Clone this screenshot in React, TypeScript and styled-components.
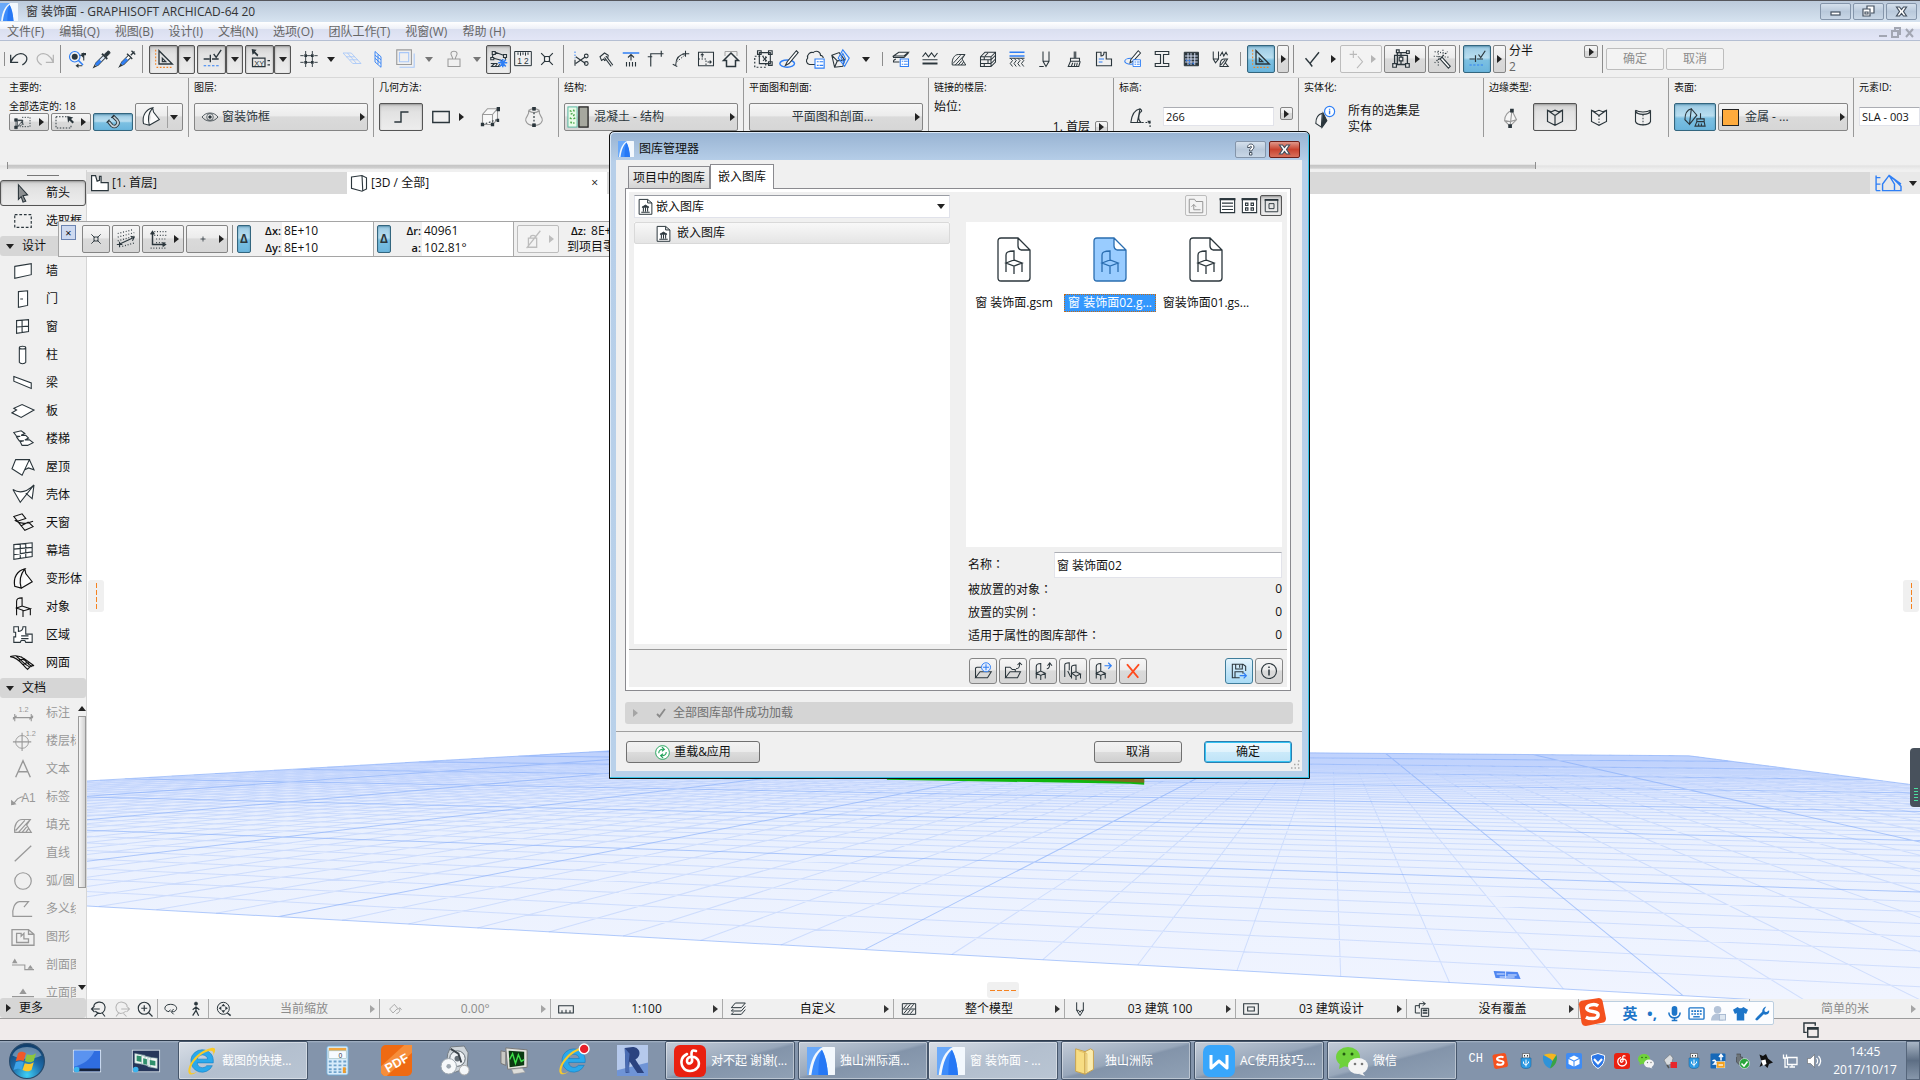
import React, { ReactNode } from "react";
import styled, { createGlobalStyle, css } from "styled-components";

const INK = "#2b363c";
const BLUE = "#2f7ff5";
const PALE = "#a9c8f8";
const GREY = "#9b9b9b";
const ORANGE = "#f58220";

const Global = createGlobalStyle`
  *, *::before, *::after { box-sizing: border-box; }
  body { margin: 0; background: #fff; overflow: hidden; }
  body, button, input, select {
    font-family: "Open Sans", "Noto Sans CJK SC", sans-serif;
    font-size: 12px;
    line-height: 16px;
    color: #111;
  }
  button { margin: 0; padding: 0; border: 0; background: none; }
`;

/* ---------- icons ---------- */

const p = (d: string, stroke: string = "currentColor", fill: string = "none", w = 1.2) => (
  <path d={d} stroke={stroke} fill={fill} strokeWidth={w} />
);
const dash = (d: string, stroke: string = "currentColor", pattern = "2 2") => (
  <path d={d} stroke={stroke} fill="none" strokeWidth={1.3} strokeDasharray={pattern} />
);
const t = (x: number, y: number, size: number, s: string, fill = "currentColor") => (
  <text x={x} y={y} fontSize={size} fill={fill} stroke="none" fontFamily="Liberation Sans, sans-serif">
    {s}
  </text>
);

const icons: Record<string, ReactNode> = {
  undo: <>{p("M2 7v9h9M2 16C5 8 12 4 17 6c7 3 5 10-1 13", "currentColor", "none", 1.5)}</>,
  redo: <>{p("M22 7v9h-9M22 16C19 8 12 4 7 6c-7 3-5 10 1 13", "currentColor", "none", 1.5)}</>,
  findPick: <>{p("M15 7h6v7M19 21h-7", INK, "none", 1.4)}{p("M17 7l4-4v8zM14 18l-4 3 4 3zM18 4h6v3h-6z", "none", INK)}<circle cx="9" cy="9" r="7" stroke={BLUE} fill="none" strokeWidth="1.5" /><circle cx="9" cy="9" r="4" fill={INK} stroke="none" />{p("M14 14l6 6", BLUE, "none", 2.2)}</>,
  dropper: <>{p("M15 6l4-4c2-2 5 1 3 3l-4 4z", INK, INK)}{p("M12 5l7 7", INK, "none", 2.4)}{p("M13 8L4 17l-3 6 6-3 9-9", INK, "#dfe9f8", 1.4)}{p("M10 14l-6 6", BLUE, "none", 4)}</>,
  syringe: <>{p("M17 7l5-5M18 1l5 5M12 5l7 7", INK, "none", 1.8)}{p("M14 7l-9 9-3 6 6-3 9-9z", INK, "#fff", 1.4)}{p("M12 12l-7 7", BLUE, "none", 4)}{p("M5 19l-4 4", INK)}</>,
  setSquare: <>{p("M6 2v16h16z", INK, "none", 1.6)}{p("M10 11v4h4z", INK, "none", 1.5)}{dash("M2 1v20", ORANGE)}{dash("M3 22h20", ORANGE)}</>,
  snap: <>{p("M2 12h7M10 7v9M12 12h8M14 6l3 4 6-9", INK, "none", 1.6)}{dash("M2 20h20", BLUE, "3 2")}</>,
  coords: <>{p("M2 0l1 7 2-2 4 4 1-2-4-4 2-2z", "none", INK)}{p("M3 11h15v10H3z", INK, "none", 1.5)}{t(5, 20, 9, "XY")}{p("M21 14h3M21 19h3", INK, "none", 1.5)}</>,
  gridPlus: <>{p("M7 0v5M7 9v6M7 19v5M17 0v5M17 9v6M17 19v5M-1 7h5M9 7h6M20 7h5M-1 17h5M9 17h6M20 17h5", INK, "none", 1.4)}{p("M5 5h4v4H5zM15 5h4v4h-4zM5 15h4v4H5zM15 15h4v4h-4z", "none", INK)}</>,
  planeFlat: <>{p("M0 4h11l13 14H13zM4 9h12M9 13h11M6 4l12 14", PALE)}</>,
  planeWall: <>{p("M8 2l8 7v14l-8-7zM8 7l8 6M8 11l8 7M12 6v13", BLUE)}</>,
  slab: <>{p("M6 21h16V6", PALE)}{p("M3 2h16v16H3z", GREY)}{p("M6 5h10v10H6z", PALE)}</>,
  stamp: <>{p("M4 12h16v10H4zM10 12c1-3-3-5-2-8 1-3 7-3 8 0 1 3-3 5-2 8", "currentColor", "none", 1.4)}</>,
  crane: <>{p("M3 2h4v4H3zM18 6h4v4h-4zM1 10h4v3H1zM7 3l11 4M4 6l-1 4M5 11l11 3M20 10l1 3", INK, "none", 1.5)}{p("M1 22h12M1 18h9M2 22l4-4M7 22l3-4M11 22l2-3", INK, "none", 1.5)}{p("M17 12v11M11 17h12M13 13l8 9M21 13l-8 9", BLUE, "none", 2)}</>,
  ruler12: <>{p("M2 3h20M2 20h20M2 3v17M22 3v17M6 4v3M9 4v4M12 4v3M15 4v4M18 4v3", INK)}{t(5, 18, 10, "1 2", INK)}</>,
  crossBox: <>{p("M9 9h6v6H9zM5 5l5 5M19 5l-5 5M5 19l5-5M19 19l-5-5", INK, "none", 1.4)}</>,
  scissors: <>{dash("M4 2v9", BLUE)}{p("M4 13v8M5 9l13 9M5 18l13-9", INK, "none", 1.5)}<circle cx="19" cy="8" r="2.5" fill="none" strokeWidth="1.4" /><circle cx="19" cy="18" r="2.5" fill="none" strokeWidth="1.4" /></>,
  axe: <>{p("M4 9l6-5 5 3-1 5-4 2-1-2-3 2z", INK, "none", 1.4)}{p("M11 9l9 12", INK, "none", 4)}{p("M11 9l9 12", "#f0f0f0", "none", 1.4)}</>,
  alignTop: <>{p("M1 4h22", BLUE, "none", 2)}{p("M12 6v8M8 10l4-4 4 4M6 16v6M10 16v6M14 16v6M18 16v6", INK, "none", 1.5)}</>,
  corner: <>{p("M5 22V9M1 9h6M5 9V5h17M19 1v8", INK, "none", 1.5)}</>,
  fillet: <>{p("M5 20c0-9 4-14 13-15M1 19l6 3M18 1v8M14 5h9", INK, "none", 1.4)}{dash("M6 16L18 6")}</>,
  resize: <>{p("M2 3h20v18H2z", INK, "none", 1.4)}{dash("M2 12h10v9", INK)}{p("M7 10V5M5 7l2-2 2 2M14 16h5M17 14l2 2-2 2", INK, "none", 1.4)}</>,
  house: <>{p("M2 14L12 4l10 10h-4v8H6v-8z", INK, "none", 2)}{p("M4 8V2h16v6", GREY)}</>,
  group: <>{p("M8 5h12v12H8zM6 3h4v4H6zM18 3h4v4h-4zM18 15h4v4h-4z")}{dash("M3 9h12v12H3z", INK)}{p("M12 10l4 4M16 10l-4 4")}</>,
  editRing: <><ellipse cx="10" cy="17" rx="8" ry="4" fill="none" stroke={BLUE} strokeWidth="1.6" />{p("M20 3l2 2-10 12-4 2 2-4z", INK, "#fff")}</>,
  cloudList: <>{p("M12 18H6c-4-1-4-5-2-7-1-4 3-7 6-6 3-3 8-1 8 3 2 0 3 2 3 3")}{p("M12 12h10v10H12z", BLUE, "#fff")}{p("M14 15h2M17 15h4M14 19h2M17 19h4", BLUE)}</>,
  rotateBox: <>{p("M2 8l8-3 6 8-2 7-9 1zM2 8l6 6-3 7M8 14l8-1")}{p("M14 2l7 9-5 9-7-9zM14 6l3 6-2 4-3-6z", BLUE)}</>,
  layersList: <>{p("M2 8l7-5h13l-6 5zM2 8v2h14l6-6M2 14l3-2M2 14v2h8", INK, "none", 1.4)}{p("M11 12h11v10H11z", BLUE, "#fff", 1.4)}{p("M13 15h2M16 15h5M13 19h2M16 19h5", BLUE)}</>,
  lineTypes: <>{p("M2 9l4-5 4 5 4-5 4 5 4-5M2 13h20", INK, "none", 1.5)}{p("M2 18h20", INK, "none", 2.6)}</>,
  fill: <>{p("M3 20c-1-8 3-14 8-14h9l-4 6 5 8zM4 18L14 7M7 20L19 7M11 20l5-6M15 20l3-4", "currentColor", "none", 1.3)}</>,
  brick: <>{p("M2 9l6-6h14v13l-6 6H2zM2 9h14v13M16 9l6-6M2 13h14l6-6M2 18h14l6-6M7 9v4M12 13v5M7 18v4M12 4l-4 4", INK, "none", 1.4)}</>,
  composite: <>{p("M2 3h20M2 8h20", BLUE, "none", 2)}{p("M3 11l3 3-3 4 3 4M8 11l3 3-3 4 3 4M13 11l3 3-3 4 3 4M18 11l3 3-3 4 3 4M2 11h20", INK, "none", 1.3)}</>,
  pen: <>{p("M8 2v13l4 7 4-7V2M8 15h8M3 22h6", INK, "none", 1.4)}</>,
  brush: <>{p("M11 2v9M13 2v9M6 11h12v4H6zM6 15l-3 7h14l2-7M7 22l2-5M11 22l1-5M14 22l1-5", INK, "none", 1.4)}</>,
  zone: <>{p("M2 3h6v5c3 0 4-2 4-5h3v9h7v9H2z", INK, "none", 1.5)}{p("M5 12h7M5 16h5", BLUE, "none", 1.4)}</>,
  penList: <><ellipse cx="9" cy="15" rx="8" ry="4" fill="none" stroke={BLUE} strokeWidth="1.4" />{p("M19 1l3 3-10 11-4 2 1-4z", INK, "#fff", 1.4)}{p("M12 13h10v9H12z", BLUE, "#fff")}{p("M14 16h2M17 16h4M14 19h2M17 19h4", BLUE)}</>,
  beamI: <>{p("M3 2h18v4h-7v12h7v4H3v-4h7V6H3z", INK, "none", 1.5)}</>,
  table: <>{p("M3 3h19v18H3z", INK, INK)}{p("M4 8h17M4 12h17M4 16h17M8 4v16M12 4v16M17 4v16", "#dfe8ff")}{p("M5 14h2M9 14h2M9 18h2M14 18h2", BLUE, "none", 2)}</>,
  penHatch: <>{p("M3 2v10l3 5 4-5V2M3 12h7M12 8l3-5 2 5 3-5 2 4M12 22c0-6 2-10 5-10h5l-3 5 4 5zM13 20l6-7M16 21l4-5", INK, "none", 1.4)}</>,
  branch: <>{p("M2 11l6 7L20 3M8 18l3 4", INK, "none", 1.9)}</>,
  plusChev: <>{p("M8 3v8M4 7h8M13 9l5 6-6 7", "#b9b9b9")}</>,
  nodes: <>{p("M5 8h14v10H5zM8 3v15M12 5v13M8 5h12", INK, "none", 1.4)}{p("M7 2h3v3H7zM18 3h3v3h-3zM3 17h4v4H3zM17 17h4v4h-4zM10 10h4v4h-4z", INK, "#e8e8e8", 1.3)}</>,
  wand: <>{p("M12 10l9 10-2 2-9-10z", INK, "#fff")}{dash("M4 4l14 2M3 9l16 1M6 14l12-10M8 3v16M13 2v7M4 16l10-8", INK, "1 2")}</>,
  pick: <>{p("M1 7h4v4H1zM1 18h4v4H1zM3 11v7M5 9h8v6M5 19l10-4", INK, INK, 1)}{p("M5 10h8l-8 9z", INK, "#eee")}{dash("M12 5h12v14H9")}</>,
  marqueeArrow: <>{dash("M0 5h14M0 5v15h20v-4")}{p("M15 4l8 2-3 2 4 4-2 2-4-4-2 3z", "none", INK)}</>,
  magnet: <>{p("M4 11l6 7c6 5 14-3 9-9l-7-7", INK, "none", 6)}{p("M5 12l5 6c6 5 14-3 9-9l-6-6", "#c3ced4", "none", 3)}{p("M1 13l5-5M9 5l5-5", INK, "none", 2)}</>,
  morph: <>{p("M3 20C1 10 6 3 14 1c-5 6-6 14-4 21zM14 1l1 5 7 9-12 7", "currentColor", "#fbfbfb", 1.3)}</>,
  eye: <>{p("M0 12c6-8 18-8 24 0-6 8-18 8-24 0z")}<circle cx="12" cy="12" r="5" fill="none" /><circle cx="12" cy="12" r="2" fill="currentColor" /></>,
  step: <>{p("M4 18h8V6h9", INK, "none", 1.7)}</>,
  rect: <>{p("M3 6h18v12H3z", INK, "none", 1.5)}</>,
  box3d: <>{p("M3 21V9l6-7h12v13l-6 6zM3 9h12v12M15 9l6-7", GREY, "#f8f8f8", 1.3)}{p("M20 0h4v5h-4zM13 19h4v4h-4zM1 19h4v4H1zM20 14h3v4h-3z", "none", INK)}{dash("M3 21l18-6")}</>,
  revolve: <>{p("M6 5c4-3 8-3 12 0M6 5c2 5-4 6-3 11 2 7 16 7 18 0 1-5-5-6-3-11M6 5c4 3 8 3 12 0", GREY, "none", 1.3)}{dash("M12 3v19")}{p("M10 1h4v4h-4zM10 19h4v4h-4z", "none", INK)}</>,
  concrete: <><rect x="1" y="1" width="10" height="22" fill="#e9fbe9" stroke="#4bb09a" /><rect x="13" y="1" width="10" height="22" fill="#a6a89f" stroke="#222" strokeWidth="1.4" />{p("M3 5l2 1M7 4l1 2M4 9l2-1M8 9l-1 2M3 13l2 1M7 14l2-1M4 17l1 2M8 18l-1 1", "#44a844", "none", 1.5)}</>,
  elevation: <>{p("M2 18c1-9 5-14 10-15 3 2 2 3 0 4-2 4-2 8 1 11zM12 3L9 18")}{dash("M14 18h9v5")}{p("M20 16h4l-2 4z", "none", INK)}</>,
  infoSolid: <>{p("M2 19c0-7 3-10 7-11l-1 15z", INK, "#f4f4f4")}{p("M10 8l4 8-5 7z", INK, INK)}<circle cx="17" cy="6" r="5.500" fill="#fff" stroke={BLUE} strokeWidth="1.3" />{p("M17 5v4M17 3v1", BLUE, "none", 1.5)}</>,
  edgeBall: <>{p("M5 16c0-6 4-10 8-11l-2 17zM13 5l5 10-7 7M5 16l6 1 7-2", GREY, "#f6f6f6")}{p("M11 3h4v4h-4zM9 20h4v4H9z", "none", INK)}</>,
  edgeHard: <>{p("M2 3l5 2 5-2 5 2 5-2v15l-10 5-10-5zM2 3l10 7 10-7M12 10v13", INK, "none", 1.6)}</>,
  edgeSoft: <>{p("M2 3l5 2 5-2 5 2 5-2v15l-10 5-10-5zM2 3l10 7 10-7", INK, "none", 1.5)}{dash("M12 10v13")}</>,
  edgeRound: <>{p("M2 3c5 3 15 3 20 0M2 3v15c2 6 18 6 20 0V3M2 4c2 6 18 6 20 0", INK, "none", 1.5)}{dash("M12 9v14")}</>,
  paint: <>{p("M1 15c0-7 3-11 7-12l-2 17zM8 3l6 7-8 10")}{p("M18 8v6M14 14h8v3h-8zM14 17l-2 5h11l-1-5M16 22v-3M19 22v-3")}</>,
  navigator: <>{p("M1 5v14M1 7h4M1 13h4M1 19h4M7 19v-6l6-8 5 4 6 6v4zM13 5l5 8v6M13 5l11 8", BLUE, "none", 1.3)}</>,
  cursor: <>{p("M7 3l10 11-5 1 3 6-3 1-2-6-3 3z", INK, "#8c8f91")}</>,
  marquee: <>{dash("M3 5h18v14H3z", INK, "3 2")}</>,
  wall: <>{p("M3 7l18-3v12L3 20z", INK, "#fff")}</>,
  door: <>{p("M7 4l10-1v16L7 21zM9 12h3", INK, "#fff")}</>,
  window: <>{p("M5 5l13-1v13L5 19zM11 4v14M5 12l13-1", INK, "#fff")}</>,
  column: <>{p("M8 4v16c1 2 6 2 7 0V4M8 4c0-2 7-2 7 0s-7 2-7 0z", INK, "#fff")}</>,
  beam: <>{p("M2 5v5l19 8v-6zM2 5l19 7", INK, "#fff")}</>,
  floor: <>{p("M0 14l5-3-3-2 9-4 13 6-14 8z", INK, "#fff")}</>,
  stairs: <>{p("M2 5l8-2 4 3-4 2 5 0 3 3-4 2 5 0 4 3-6 3-6 0-2-4 4-1-5 0-3-4 4-1-4 0z", INK, "#fff")}</>,
  roof: <>{p("M4 4h15L11 21 0 14zM19 4l5 11-6-2-4 2", INK, "#fff")}</>,
  shell: <>{p("M1 6c8 5 16 2 23-5L9 20zM24 1l-2 15-7-6", INK, "#fff")}</>,
  skylight: <>{p("M2 5l9-3 4 5-9 3zM3 9c4 3 9 4 14 3l6-2M6 10l4 5 8-4M10 15l4 5 9-4-5-5")}</>,
  curtain: <>{p("M2 5l20-2v15L2 21zM9 4v16M15 4v15M2 10l20-2M2 16l20-3", INK, "#fff")}</>,
  chair: <>{p("M5 13V6c0-3 2-4 6-4v9M5 13l6-2 9 3-7 2zM5 13v8M12 16v7M20 14v7")}</>,
  zoneBig: <>{p("M2 3h5v5c3 0 5-2 5-5h3v8h7v9h-7l-1-2-4 0-1 2H2v-6h2V9H2zM10 13h8M10 16h8", INK, "#fff")}</>,
  mesh: <>{p("M-2 5c6-2 12 0 15 2l11 8c-4-1-5 2-7 4C12 15 8 6-2 5zM4 4c5 3 8 9 15 12M10 5c4 3 6 8 12 11M7 9c3-1 5-2 7 0M12 14c2-2 4-3 7-2")}</>,
  dim: <>{p("M1 17h22M3 13v8M21 13v8M1 19l4-4M19 19l4-4")}{t(7, 11, 8, "1.2")}</>,
  level: <><circle cx="11" cy="13" r="7" fill="none" />{p("M1 13h20M11 3v20")}{t(15, 7, 8, "1.2")}</>,
  text: <>{p("M4 21L12 3l8 18M7 15h10", "currentColor", "none", 1.5)}</>,
  label: <>{p("M1 20l5-6 4-2h2")}{p("M-1 21v-6l6 5z", "none", "currentColor")}{t(10, 17, 13, "A1")}</>,
  line: <>{p("M3 21L21 4", "currentColor", "none", 1.4)}</>,
  circle: <circle cx="12" cy="12" r="9" fill="none" strokeWidth="1.3" />,
  polyline: <>{p("M22 20H1C0 11 3 5 8 4h10l-5 6", "currentColor", "none", 1.3)}</>,
  figure: <>{p("M0 4h18l6 5v12H0zM18 4v5h6M5 8h5v3l3-3v6h5v4H5z", "currentColor", "none", 1.4)}</>,
  section: <>{p("M0 12h14v5h10")}{p("M0 10l3-5 3 5zM17 16l3-4 3 4z", "none", "currentColor")}</>,
  elev: <>{p("M0 16h24")}{p("M8 13l4-6 4 6z", "none", "currentColor")}</>,
  zoomBack: <>{p("M2 12h11M6 8l-4 4 4 4M5 8c2-6 11-7 14-2 3 5 0 11-5 12-3 0-5-1-7-3M16 17l4 5M10 18l-4 4", "currentColor", "none", 1.5)}</>,
  zoomFwd: <>{p("M22 12H11M18 8l4 4-4 4M19 8c-2-6-11-7-14-2-3 5 0 11 5 12 3 0 5-1 7-3M8 17l-4 5M14 18l4 4", "currentColor", "none", 1.4)}</>,
  zoomIn: <><circle cx="11" cy="11" r="8" fill="none" strokeWidth="1.5" />{p("M17 17l5 5M7 11h8M11 7v8", "currentColor", "none", 1.6)}</>,
  orbit: <>{p("M9 16C0 15 1 5 11 5c11 0 12 9 5 11l-3 0M16 12l-4 4 4 4M9 16l2-3", "currentColor", "none", 1.5)}</>,
  walk: <>{p("M12 8v6l4 8M12 14l-5 8M7 13l5-4 5 4", "currentColor", "none", 1.8)}<circle cx="12" cy="4" r="2.4" fill="currentColor" /></>,
  zoomFit: <><circle cx="11" cy="11" r="9" fill="none" strokeWidth="1.5" />{p("M17 18l5 4", "currentColor", "none", 2.2)}{p("M11 4l3 4H8zM11 18l3-4H8zM4 11l4-3v6zM18 11l-4-3v6z", "none", "currentColor")}</>,
  rotate: <>{p("M4 12l7-7 5 6-7 7zM14 19c4-1 6-4 5-8M16 13l3-3 3 3")}</>,
  scale: <>{p("M1 7h22v11H1zM6 18v-4M12 18v-5M18 18v-4", "currentColor", "none", 1.6)}</>,
  layers: <>{p("M2 10l6-7h15l-6 7zM2 15l3-3M2 15h15l6-7M2 20l3-3M2 20h15l6-7", "currentColor", "none", 1.5)}</>,
  modelView: <>{p("M2 4h20v16H2zM2 12h20M4 11l5-6M9 11l5-6M14 11l5-6M4 19l5-6M9 19l5-6M14 19l5-6", "currentColor", "none", 1.5)}</>,
  penSet: <>{p("M7 2v12l5 8 5-8V2M7 14h3l2 3 2-3h3", "currentColor", "none", 1.5)}</>,
  frame: <>{p("M1 4h22v16H1zM7 9h10v6H7z", "currentColor", "none", 1.6)}</>,
  override: <>{p("M8 7H2v11h7M11 11h11v12H11zM8 11V4h9M13 1l4 3-4 3", "currentColor", "none", 1.5)}{p("M13 14h7M13 18h7", "currentColor", "none", 2.4)}</>,
  tray: <>{p("M3 16l4-8h10l4 8zM3 16v4h18v-4")}</>,
  folderPlus: <>{p("M2 21V8l2-1h6M2 21l6-8h15l-5 8z", INK, "none", 1.4)}<circle cx="16" cy="7" r="6" fill="#e6eefc" stroke={BLUE} strokeWidth="1.3" />{p("M12 7h8M16 3v8", BLUE, "none", 1.4)}</>,
  folderUp: <>{p("M2 21V7h6l3 3h4v3M2 21l6-8h14l-4 8zM16 9c4 0 5-2 5-8M18 4l3-3 3 3", INK, "none", 1.4)}</>,
  chairUp: <>{p("M3 15V6c0-3 2-4 6-4v10M3 15l6-3 6 3-6 3zM3 15v7M9 18v6M15 15v7M17 9c3 0 4-3 4-7M18 5l3-4 3 4", INK, "none", 1.4)}</>,
  chairs: <>{p("M1 12V4c0-2 2-3 6-3v10M1 12v8M5 12l4 8M10 15V7c0-2 2-3 6-3v9M10 15l6-2 6 3-6 3zM10 15v7M16 19v5M22 16v6", INK, "none", 1.4)}</>,
  chairRight: <>{p("M3 15V6c0-3 2-4 6-4v10M3 15l6-3 6 3-6 3zM3 15v7M9 18v6M15 15v7", INK, "none", 1.4)}{p("M14 5h9M19 1l4 4-4 4", BLUE, "none", 1.6)}</>,
  cross: <>{p("M4 3l15 18M20 3L5 21", "#ff4a1c", "none", 2.6)}</>,
  save: <>{p("M22 12V5l-4-3H2v20h11M7 2v7h10V2M13 3v4M6 22v-9h12v3", INK, "none", 1.6)}{p("M13 19h10M19 15l4 4-4 4", BLUE, "none", 1.8)}</>,
  info: <><circle cx="12" cy="12" r="10" fill="none" strokeWidth="1.5" />{p("M12 10v8M12 6v2", "currentColor", "none", 2)}</>,
  parent: <>{p("M3 21V3h7l2 3h9v15zM9 17V10M6 13l3-3 3 3M9 17h9")}</>,
  list: <>{p("M3 4h18v17H3zM5 9h14M5 13h14M5 17h14", INK, "#fff", 1.4)}{p("M2 4h20", INK, "none", 2.8)}</>,
  tiles: <>{p("M3 4h18v17H3zM7 9h3v3H7zM14 9h3v3h-3zM7 15h3v3H7zM14 15h3v3h-3z", INK, "#fff", 1.4)}{p("M2 4h20", INK, "none", 2.8)}</>,
  large: <>{p("M2 3h20v19H2zM8 9h8v8H8z", INK, "none", 1.5)}{p("M1 3h22", INK, "none", 2.8)}</>,
  libFile: <>{p("M3 2h12l6 5v16H3zM15 2v5h6", INK, "#fff", 1.4)}{p("M7 13l5-3 5 3z", INK, INK)}{p("M9 13v6M12 13v6M15 13v6M6 20h12", INK, "none", 1.5)}</>,
  reload: <><circle cx="12" cy="12" r="11" fill="#fff" stroke="#20a35a" strokeWidth="1.5" />{p("M6 13c0-4 3-7 8-6M11 3l4 4-4 3M18 11c0 4-3 7-8 6M13 21l-4-4 4-3", "#20a35a", "none", 1.8)}</>,
  check: <>{p("M4 14l5 5L20 4", "#8a8a8a", "none", 3.6)}</>,
  origin: <>{dash("M3 6l16-4M3 10l18-5M3 14l18-5M8 20l14-4", INK, "1 2")}{p("M4 18L21 10M17 9l4 1-2 4M5 15v6M2 18h6")}</>,
  axes: <>{dash("M8 4h14M8 8h14M10 12h12M10 16h12M4 22h16", INK, "1 2")}{p("M6 4v14h14M4 7l2-3 2 3M17 16l3 2-3 2", INK, "none", 1.6)}</>,
  plus: <>{p("M12 7v10M7 12h10", INK, "none", 1.6)}</>,
  gravity: <>{p("M7 11h9v10H7zM9 11c0-4 6-4 6 0M20 3L5 22", "#bdbdbd", "none", 1.4)}</>,
  planTab: <>{p("M2 2h5l2 7 3-1V3l2 0v8h9v10H2z", INK, "#fff", 1.5)}</>,
  cubeTab: <>{p("M2 4l14-2 6 3v15l-6 3-14-4zM16 2l1 20", INK, "#fff", 1.5)}</>,
};

const Svg = styled.svg<{ $s: number }>`
  width: ${(q) => q.$s}px;
  height: ${(q) => q.$s}px;
  flex: none;
  display: block;
  overflow: visible;
`;
const Icon = ({ n, s = 22 }: { n: string; s?: number }) => (
  <Svg $s={s} viewBox="0 0 24 24" stroke="currentColor" fill="none" aria-hidden>
    {icons[n]}
  </Svg>
);

const Tri = styled.i<{ $dir?: "down"; $c?: string }>`
  flex: none;
  display: block;
  border: 4px solid transparent;
  ${(q) =>
    q.$dir === "down"
      ? css`border-top: 5px solid ${q.$c || "#222"}; border-bottom: 0;`
      : css`border-left: 5px solid ${q.$c || "#222"}; border-right: 0;`}
`;

const ArchiLogo = ({ s = 18 }: { s?: number }) => (
  <Svg $s={s} viewBox="0 0 32 32" aria-hidden>
    <rect width="32" height="32" rx="1" fill="#f3f8fd" />
    <path d="M0 0h18C9 5 4 15 2 32H0z" fill="#69a9fa" />
    <path d="M5 32C7 17 11 8 17 3c4 7 6 17 7 29z" fill="#3d8cfb" />
    <path d="M13 32c0-12 1-22 4-29 4 7 6 17 7 29z" fill="#2678f5" />
  </Svg>
);

/* ---------- shared controls ---------- */

type Look = "raised" | "pressed" | "blue" | "off" | "flat";
const looks: Record<Look, ReturnType<typeof css>> = {
  raised: css`border: 1px solid #858585; background: linear-gradient(#f6f6f6, #ececec 45%, #dadada 50%, #d6d6d6);`,
  pressed: css`border: 1px solid #555; background: linear-gradient(#cfcfcf, #e2e2e2 30%, #ededed); box-shadow: inset 0 1px 2px #999;`,
  blue: css`border: 1px solid #33667f; background: linear-gradient(#9bc9e2, #b9def0 45%, #7cc0e2 55%, #6ab5dd); box-shadow: inset 0 1px 2px #5b93b0;`,
  off: css`border: 1px solid #bdbdbd; background: #f3f3f3; color: #8d8d8d;`,
  flat: css`border: 0; background: none;`,
};
const Btn = styled.button<{ $look?: Look; $w?: number; $h?: number; $align?: string; $c?: string }>`
  color: ${(q) => q.$c || INK};
  ${(q) => looks[q.$look || "flat"]}
  width: ${(q) => (q.$w ? q.$w + "px" : "auto")};
  height: ${(q) => q.$h || 28}px;
  border-radius: 2px;
  display: flex;
  flex: none;
  align-items: center;
  justify-content: ${(q) => q.$align || "center"};
`;
const Grow = styled.span`
  flex: 1;
`;
const Divider = styled.i`
  width: 1px;
  height: 22px;
  margin: 0 2px 0 6px;
  background: #a0a0a0;
`;

/* ---------- application frame ---------- */

const Page = styled.div`
  position: relative;
  height: 100vh;
  display: flex;
  flex-direction: column;
  background: #f0f0f0;
  overflow: hidden;
`;
const TitleBar = styled.header`
  height: 22px;
  flex: none;
  display: flex;
  align-items: center;
  gap: 2px;
  padding: 0 3px 0 0;
  border-top: 1px solid #55565c;
  background: linear-gradient(#bccadb, #d6e3f0);
`;
const TitleText = styled.h1`
  margin: 0 auto 0 6px;
  font-size: 12px;
  font-weight: 400;
  line-height: 20px;
  color: #333;
`;
const WinBtn = styled.button`
  width: 31px;
  height: 17px;
  border: 1px solid #8495aa;
  border-radius: 2px;
  background: linear-gradient(#d5e0ec, #b9c9db 50%, #c9d7e6);
  display: flex;
  align-items: center;
  justify-content: center;
`;
const MenuBar = styled.nav`
  height: 19px;
  flex: none;
  display: flex;
  align-items: center;
  padding: 2px 4px 0 7px;
  gap: 15px;
  background: linear-gradient(#fff, #eef1f8 36%, #dadff0 40%, #e3e6f6);
  border-bottom: 1px solid #b5bfd3;
`;
const MenuItem = styled.button`
  color: #666;
  white-space: nowrap;
`;
const MdiBtn = styled.button`
  width: 13px;
  height: 14px;
  display: flex;
  justify-content: center;
  align-items: center;
  color: #a2a6b2;
`;
const Mdi = styled.div`
  margin-left: auto;
  display: flex;
`;

const Toolbar = styled.div`
  height: 37px;
  flex: none;
  display: flex;
  align-items: center;
  padding-left: 2px;
  border-bottom: 1px solid #d8d8d8;
  overflow: hidden;
`;
const Sep = styled.i<{ $w?: number; $short?: boolean }>`
  flex: none;
  width: ${(q) => q.$w || 5}px;
  height: ${(q) => (q.$short ? 14 : 28)}px;
  display: flex;
  justify-content: center;
  &::before { content: ""; width: 1px; background: #8c8c8c; }
`;
const Gap = styled.i<{ $w?: number }>`
  flex: none;
  width: ${(q) => q.$w || 2}px;
`;
const Split = styled.div`
  flex: none;
  display: flex;
  margin-right: 2px;
`;
const Ruling = styled.div`
  flex: none;
  display: flex;
  flex-direction: column;
  width: 78px;
  padding-left: 3px;
  line-height: 16px;
  color: #666;
  & > b { font-weight: 400; color: #111; }
`;
const Upper = styled.div`
  align-self: flex-start;
  padding-top: 4px;
`;

const InfoBox = styled.section`
  height: 84px;
  flex: none;
  display: grid;
  grid-template-columns: repeat(10, 185px) minmax(60px, 1fr);
  padding-left: 4px;
  overflow: hidden;
`;
const InfoCell = styled.div`
  height: 59px;
  padding: 0 5px;
  border-right: 1px solid #999;
  display: flex;
  flex-direction: column;
  justify-content: space-between;
  &:last-child { border: 0; padding-right: 0; }
`;
const InfoLabel = styled.label`
  display: block;
  padding-top: 1px;
  font-size: 10px;
  line-height: 16px;
`;
const InfoRow = styled.div<{ $gap?: number }>`
  height: 34px;
  display: flex;
  align-items: flex-start;
  gap: ${(q) => q.$gap ?? 2}px;
`;
const TallRow = styled(InfoRow)`
  height: 38px;
  & > button { margin-top: 4px; }
`;
const Stack = styled.div`
  display: flex;
  flex-direction: column;
  & > div { display: flex; gap: 2px; }
`;
const Small = styled.span`
  font-size: 10px;
  line-height: 14px;
`;
const Storey = styled.div`
  align-self: flex-end;
  display: flex;
  align-items: center;
  gap: 5px;
  margin: 0 0 2px auto;
`;
const FieldWrap = styled.div`
  flex: 1;
  min-width: 0;
  display: flex;
  padding-top: 4px;
`;
const Field = styled.input`
  min-width: 0;
  flex: 1;
  height: 19px;
  border: 1px solid #e2e3ea;
  border-top-color: #abadb3;
  background: #fff;
  padding: 0 2px;
  font-size: 11px;
`;
const Swatch = styled.i`
  width: 17px;
  height: 17px;
  margin: 0 6px 0 3px;
  border: 1px solid #222;
  background: #ffab3d;
`;
const Track = styled.div`
  height: 8px;
  flex: none;
  padding: 0 20% 0 7px;
  background: linear-gradient(#f0f0f0 30%, #e3e3e3 50%, #f0f0f0);
`;
const Thumb = styled.div`
  height: 7px;
  border: solid #8e8e8e;
  border-width: 0 1px;
  background: linear-gradient(#f0f0f0 30%, #c6c6c6 50%, #d0d0d0 90%, #f0f0f0);
`;

const Middle = styled.div`
  flex: 1;
  min-height: 0;
  display: flex;
  border-bottom: 1px solid #9c9c9c;
`;
const Toolbox = styled.aside`
  width: 87px;
  flex: none;
  display: flex;
  flex-direction: column;
  border-right: 1px solid #d5d5d5;
  overflow: hidden;
`;
const Grip = styled.i`
  height: 10px;
  flex: none;
  display: flex;
  justify-content: center;
  align-items: center;
  &::before { content: ""; width: 32px; height: 1px; background: #777; }
`;
const Tool = styled.button<{ $h?: number; $on?: boolean; $dim?: boolean }>`
  height: ${(q) => q.$h || 28}px;
  flex: none;
  width: 100%;
  padding-left: 12px;
  display: flex;
  align-items: center;
  gap: 12px;
  white-space: nowrap;
  overflow: hidden;
  color: ${(q) => (q.$dim ? "#989898" : "#111")};
  border-radius: 3px;
  ${(q) => q.$on && looks.pressed}
  ${(q) => q.$on && css`padding-left: 11px;`}
`;
const Heading = styled.button`
  height: 20px;
  flex: none;
  width: 100%;
  display: flex;
  align-items: center;
  gap: 8px;
  padding-left: 6px;
  background: #d6d6d6;
  border-radius: 3px;
`;
const Design = styled.div`
  flex: none;
  display: flex;
  flex-direction: column;
  padding-bottom: 1px;
  & > button:first-child { margin-bottom: 1px; }
`;
const Docs = styled.div`
  flex: 1;
  min-height: 0;
  display: flex;
`;
const DocList = styled.div`
  width: 76px;
  padding-top: 1px;
  overflow: hidden;
`;
const DocScroll = styled.div`
  width: 9px;
  margin-left: 1px;
  display: flex;
  flex-direction: column;
  align-items: center;
  padding: 8px 0;
`;
const DocThumb = styled.i`
  width: 8px;
  height: 172px;
  margin: 5px 0 auto;
  border: 1px solid #999;
  background: linear-gradient(90deg, #f6f6f6, #d2d2d2);
`;
const Up = styled(Tri)`
  transform: rotate(180deg);
`;

const Main = styled.main`
  flex: 1;
  min-width: 0;
  display: flex;
  flex-direction: column;
`;
const Tabs = styled.div`
  height: 24px;
  flex: none;
  display: flex;
  padding-top: 2px;
`;
const Tab = styled.button<{ $on?: boolean }>`
  width: 260px;
  flex: none;
  display: flex;
  align-items: center;
  gap: 3px;
  padding: 0 9px 0 3px;
  background: ${(q) => (q.$on ? "#fff" : "#d9d9d9")};
`;
const TabRest = styled.div`
  flex: 1;
  display: flex;
  justify-content: flex-end;
  background: #d9d9d9;
`;
const Nav = styled.button`
  width: 50px;
  display: flex;
  align-items: center;
  justify-content: flex-end;
  gap: 8px;
  padding-right: 3px;
  background: #e9e9e9;
`;
const View = styled.div`
  position: relative;
  flex: 1;
  min-height: 0;
  background: #fff;
  overflow: hidden;
`;
const Scene = styled.svg`
  display: block;
  width: 100%;
  height: 100%;
`;
const Handle = styled.i<{ $side: "left" | "right" | "bottom" }>`
  position: absolute;
  display: flex;
  align-items: center;
  justify-content: center;
  background: #f0f0f0;
  border-radius: 3px;
  ${(q) =>
    q.$side === "bottom"
      ? css`bottom: 1px; left: 900px; width: 32px; height: 16px;`
      : css`top: 386px; ${q.$side}: 1px; width: 16px; height: 32px;`}
  &::before {
    content: "";
    ${(q) =>
      q.$side === "bottom"
        ? css`width: 26px; height: 1px; background: repeating-linear-gradient(90deg, ${ORANGE} 0 5px, transparent 5px 7px);`
        : css`width: 1px; height: 26px; background: repeating-linear-gradient(${ORANGE} 0 5px, transparent 5px 7px);`}
  }
`;
const Meter = styled.i`
  position: absolute;
  right: 0;
  top: 554px;
  width: 10px;
  height: 59px;
  border-radius: 4px 0 0 4px;
  background: #48515c;
  &::before {
    content: "";
    position: absolute;
    inset: 40px 2px 6px 4px;
    background: repeating-linear-gradient(#4be0a0 0 1px, #48515c 1px 3px);
  }
`;

const StatusBar = styled.div`
  height: 19px;
  flex: none;
  display: flex;
  background: #f0f0f0;
`;
const NavGroup = styled.div<{ $w: number }>`
  width: ${(q) => q.$w}px;
  flex: none;
  display: flex;
  justify-content: space-around;
  align-items: center;
  border-right: 1px solid #aaa;
`;
const StatusCell = styled.button<{ $dim?: boolean }>`
  flex: 1;
  display: flex;
  align-items: center;
  justify-content: space-between;
  padding: 0 4px 0 7px;
  border-right: 1px solid #aaa;
  color: ${(q) => (q.$dim ? "#8c8c8c" : "#111")};
  & > :first-child { margin-right: 5px; }
  &:last-child { border: 0; }
`;
const CellIcon = styled.span<{ $c: string }>`
  width: 17px;
  color: ${(q) => q.$c};
`;
const Slot = styled.i<{ $w: number }>`
  width: ${(q) => q.$w}px;
`;
const Strip = styled.div`
  height: 21px;
  flex: none;
  display: flex;
  justify-content: flex-end;
  align-items: center;
  padding-right: 101px;
  background: #f0ebeb;
`;

/* ---------- coordinate palette ---------- */

const Palette = styled.div`
  position: absolute;
  left: 58px;
  top: 221px;
  width: 600px;
  height: 36px;
  display: flex;
  align-items: center;
  padding-left: 2px;
  border: 1px solid #a5a5a5;
  background: #f0f0f0;
`;
const PalClose = styled.button`
  flex: none;
  align-self: flex-start;
  width: 15px;
  height: 15px;
  margin: 3px 6px 0 0;
  border: 1px solid #6b83b0;
  background: #cdd9f0;
  font-size: 11px;
  line-height: 12px;
`;
const Pair = styled.div`
  width: 120px;
  height: 34px;
  flex: none;
  display: grid;
  grid-template-columns: 27px 1fr;
  grid-template-rows: 17px 17px;
  align-items: center;
  background: linear-gradient(90deg, transparent 28px, #fff 28px);
  border-right: 1px solid #aaa;
  margin: 0 3px;
`;
const PairLabel = styled.label`
  text-align: right;
  font-size: 11px;
  font-weight: 600;
`;
const PairInput = styled.input`
  min-width: 0;
  width: 80px;
  height: 16px;
  border: 0;
  padding: 0 3px;
  background: none;
`;
const Delta = styled(Btn)`
  font-weight: 700;
`;

/* ---------- library dialog ---------- */

const Dialog = styled.section`
  position: absolute;
  left: 609px;
  top: 131px;
  width: 701px;
  height: 648px;
  display: flex;
  flex-direction: column;
  padding: 0 7px 7px 6px;
  border: 1px solid #111;
  border-radius: 5px 5px 0 0;
  background: linear-gradient(#98b3d2, #b7cfe9 30px, #b9d1ea);
  box-shadow: inset -1px -1px 0 #35c4e8, inset 1px 1px 0 #dbe8f6;
`;
const DlgTitle = styled.header`
  height: 28px;
  flex: none;
  display: flex;
  align-items: center;
  padding: 6px 2px 0 2px;
  gap: 3px;
`;
const DlgName = styled.h2`
  margin: 0 auto 0 2px;
  font-size: 12px;
  font-weight: 400;
`;
const DlgBtn = styled(WinBtn)<{ $red?: boolean }>`
  ${(q) =>
    q.$red &&
    css`
      border-color: #6b1f1a;
      background: linear-gradient(#e0978a, #c9432f 50%, #d8705c);
    `}
`;
const Client = styled.div`
  flex: 1;
  min-height: 0;
  display: flex;
  flex-direction: column;
  background: #f0f0f0;
`;
const DlgTabs = styled.div`
  height: 28px;
  flex: none;
  display: flex;
  align-items: flex-end;
  padding-left: 12px;
`;
const DlgTab = styled.button<{ $on?: boolean }>`
  height: ${(q) => (q.$on ? 25 : 22)}px;
  width: ${(q) => (q.$on ? 64 : 82)}px;
  border: 1px solid #8a8a8f;
  border-bottom: 0;
  margin-bottom: ${(q) => (q.$on ? -1 : 0)}px;
  background: ${(q) => (q.$on ? "#fff" : "linear-gradient(#f0f0f0, #e6e6e6 50%, #d4d4d4)")};
  position: relative;
  z-index: ${(q) => (q.$on ? 1 : 0)};
`;
const Sheet = styled.div`
  margin: 0 11px 0 9px;
  border: 1px solid #8a8a8f;
  padding: 3px;
  background: #fff;
`;
const SheetBody = styled.div`
  display: grid;
  grid-template-columns: 1fr 1fr;
  gap: 16px;
  height: 458px;
  padding: 3px 5px 5px;
  background: #f0f0f0;
  border-bottom: 1px solid #9a9a9a;
`;
const Column = styled.div`
  display: flex;
  flex-direction: column;
  min-width: 0;
`;
const Picker = styled.div`
  height: 23px;
  flex: none;
  display: flex;
  align-items: center;
  margin-bottom: 4px;
  padding: 0 4px 0 2px;
  border: 1px solid #e0e2ea;
  border-top-color: #999ca3;
  background: #fff;
`;
const Select = styled.select`
  flex: 1;
  appearance: none;
  border: 0;
  background: none;
  padding: 0 2px;
`;
const Tree = styled.div`
  flex: 1;
  background: #fff;
`;
const TreeRow = styled.button`
  width: 100%;
  height: 22px;
  display: flex;
  align-items: center;
  gap: 5px;
  padding-left: 20px;
  border: 1px solid #d9d9d9;
  border-radius: 2px;
  background: linear-gradient(#f8f8f8, #e5e5e5);
`;
const ViewBtns = styled.div`
  height: 27px;
  flex: none;
  display: flex;
  justify-content: flex-end;
  align-items: flex-start;
  & > button:first-child { margin-right: 9px; }
`;
const Files = styled.div`
  height: 325px;
  flex: none;
  display: flex;
  align-items: flex-start;
  padding: 15px 0 0;
  background: #fff;
`;
const FileItem = styled.button`
  width: 96px;
  display: flex;
  flex-direction: column;
  align-items: center;
  gap: 12px;
`;
const FileName = styled.span<{ $on?: boolean }>`
  height: 18px;
  width: 92px;
  line-height: 16px;
  white-space: nowrap;
  border: 1px dotted ${(q) => (q.$on ? "#c96a10" : "transparent")};
  background: ${(q) => (q.$on ? "#3397fd" : "none")};
  color: ${(q) => (q.$on ? "#fff" : "#111")};
`;
const FileSvg = styled.svg`
  width: 34px;
  height: 45px;
`;
const Prop = styled.div<{ $h: number }>`
  height: ${(q) => q.$h}px;
  flex: none;
  display: flex;
  align-items: center;
  justify-content: space-between;
  padding-left: 2px;
`;
const Colon = styled.span`
  font-family: "Noto Sans CJK TC", sans-serif;
`;
const NameInput = styled(Field)`
  flex: none;
  width: 228px;
  height: 26px;
  font-size: 12px;
`;
const Actions = styled.div`
  height: 37px;
  display: flex;
  align-items: center;
  gap: 2px;
  padding: 4px 4px 0 340px;
  background: #f0f0f0;
`;
const DlgAction = styled(Btn)<{ $hot?: boolean }>`
  width: 28px;
  height: 26px;
  border-radius: 3px;
  ${(q) => q.$hot && css`border-color: #3f7d9b; background: linear-gradient(#e4f4fc, #c4e6f8 50%, #a9dbf5);`}
`;
const Report = styled.div`
  height: 22px;
  flex: none;
  display: flex;
  align-items: center;
  margin: 11px 9px 7px;
  padding-left: 8px;
  border-radius: 3px;
  background: #d5d5d5;
  color: #707070;
  & > svg { margin: 0 6px 0 17px; }
`;
const Footer = styled.footer`
  flex: 1;
  display: flex;
  align-items: flex-start;
  gap: 22px;
  padding: 9px 10px 0;
  border-top: 1px solid #a0a0a0;
  & > button:first-child { margin-right: auto; gap: 4px; }
`;
const Push = styled.button<{ $w: number; $def?: boolean }>`
  width: ${(q) => q.$w}px;
  height: 22px;
  display: flex;
  align-items: center;
  justify-content: center;
  border-radius: 3px;
  border: 1px solid #707070;
  background: linear-gradient(#f2f2f2, #ebebeb 50%, #dcdcdc 52%, #cfcfcf);
  ${(q) =>
    q.$def &&
    css`
      border-color: #2c7fb0;
      box-shadow: inset 0 0 0 1px #35c3f3;
      background: linear-gradient(#eef8fd, #e0f3fc 50%, #cbeafa 52%, #bfe3f7);
    `}
`;
const Grabber = styled.svg`
  position: absolute;
  right: 9px;
  bottom: 9px;
  width: 10px;
  height: 10px;
`;

/* ---------- input-method bar and taskbar ---------- */

const ImeBar = styled.div`
  position: absolute;
  right: 146px;
  bottom: 55px;
  height: 24px;
  display: flex;
  align-items: center;
  padding-left: 18px;
  border: 1px solid #bccfe0;
  border-radius: 2px;
  background: #fcfdff;
`;
const ImeKey = styled.button`
  width: 22px;
  height: 22px;
  display: flex;
  align-items: center;
  justify-content: center;
  color: #1d75c8;
  font-size: 15px;
  font-weight: 700;
`;
const ImeLogo = styled.div`
  position: absolute;
  left: -18px;
  top: -4px;
`;
const Taskbar = styled.footer`
  height: 40px;
  flex: none;
  display: flex;
  align-items: stretch;
  border-top: 1px solid #2e3b4c;
  background: linear-gradient(#a6b4c6, #8394ab 2px, #8394ab);
`;
const Quick = styled.button<{ $w?: number }>`
  width: ${(q) => q.$w || 59}px;
  flex: none;
  display: flex;
  align-items: center;
  justify-content: center;
`;
const Task = styled.button<{ $on?: boolean; $join?: boolean }>`
  width: 130px;
  flex: none;
  margin-left: ${(q) => (q.$join ? 0 : 3)}px;
  display: flex;
  align-items: center;
  gap: 5px;
  padding-left: 8px;
  border: 1px solid #46566b;
  border-radius: 2px;
  box-shadow: inset 0 0 0 1px rgba(255, 255, 255, 0.4);
  background: ${(q) =>
    q.$on
      ? "linear-gradient(160deg, #d8dee6, #b3bfce 50%, #b9c5d3)"
      : "linear-gradient(165deg, #c3ccd8, #98a7ba 48%, #8394aa 52%, #90a1b5)"};
  color: #fff;
  white-space: nowrap;
`;
const Tray = styled.div`
  margin-left: auto;
  display: flex;
  align-items: center;
  color: #fff;
  & > svg { margin: 0 4px; }
`;
const Lang = styled.span`
  font-family: "Liberation Mono", monospace;
  padding: 0 5px 3px;
`;
const Clock = styled.time`
  width: 78px;
  text-align: center;
  line-height: 18px;
`;
const Peek = styled.button`
  align-self: stretch;
  width: 14px;
  margin-left: 2px;
  border: 1px solid #56667b;
  background: linear-gradient(#a9b6c6, #5d6e84 50%, #8797ab);
`;

/* ---------- perspective floor ---------- */

type Pt = [number, number];
const floor: Pt[] = [[-1005, 844.6], [4921, 1177.7], [1688, 756], [664, 748]];

function projector([a, b, c, d]: Pt[]) {
  const dx1 = b[0] - c[0], dx2 = d[0] - c[0], sx = a[0] - b[0] + c[0] - d[0];
  const dy1 = b[1] - c[1], dy2 = d[1] - c[1], sy = a[1] - b[1] + c[1] - d[1];
  const det = dx1 * dy2 - dx2 * dy1;
  const g = (sx * dy2 - dx2 * sy) / det;
  const h = (dx1 * sy - sx * dy1) / det;
  return (u: number, v: number): Pt => {
    const w = g * u + h * v + 1;
    return [
      ((b[0] - a[0] + g * b[0]) * u + (d[0] - a[0] + h * d[0]) * v + a[0]) / w,
      ((b[1] - a[1] + g * b[1]) * u + (d[1] - a[1] + h * d[1]) * v + a[1]) / w,
    ];
  };
}
const at = projector(floor);
const seg = (q: Pt, r: Pt) => `M${q[0].toFixed(1)} ${q[1].toFixed(1)}L${r[0].toFixed(1)} ${r[1].toFixed(1)}`;
const gridPath = (major: boolean) => {
  let out = "";
  for (let i = 0; i <= 64; i++) {
    if ((i % 8 === 0) !== major) continue;
    const k = i / 64;
    out += seg(at(k, 0), at(k, 1)) + seg(at(0, k), at(1, k));
  }
  return out;
};

const Floor = () => (
  <Scene viewBox="87 195 1833 804" preserveAspectRatio="xMidYMid slice" aria-hidden>
    <defs>
      <linearGradient id="depth" gradientUnits="userSpaceOnUse" x1="0" y1="748" x2="0" y2="998">
        <stop offset="0" stopColor="#d5e1ff" />
        <stop offset="0.3" stopColor="#e9f0fe" />
        <stop offset="1" stopColor="#f0f4ff" />
      </linearGradient>
    </defs>
    <polygon points={floor.map((q) => q.join(",")).join(" ")} fill="url(#depth)" />
    <path d={gridPath(false)} stroke="#8fb2f8" strokeOpacity="0.32" fill="none" />
    <path d={gridPath(true)} stroke="#7fa9f8" strokeOpacity="0.6" fill="none" />
    <polygon points="887,776 1144,776 1144,785 1130,784 887,780" fill="#0fb70f" />
    <polygon points="960,776 1144,776 1144,783 1100,781" fill="#7d6a1d" />
    <path d="M1493 971l24 1 3 7-25-1z" fill="#4f86f0" />
    <path d="M1496 974h8M1507 975h9M1499 977h15M1505 971v7" stroke="#dbe7ff" />
  </Scene>
);

const FileIcon = ({ on }: { on?: boolean }) => (
  <FileSvg viewBox="0 0 34 45" fill="none" stroke={on ? "#2a6db0" : INK} strokeWidth="1.3" aria-hidden>
    <path d="M4 1h17l12 12v28q0 3-3 3H4q-3 0-3-3V4q0-3 3-3zM21 1v8q0 3 3 4h9" fill={on ? "#99ccff" : "#fff"} />
    <path d="M9 26v-8c0-3 2-4 8-4v10M9 26l8-3 8 3-8 3zM9 26v9M17 29v8M25 26v9" />
  </FileSvg>
);

/* ---------- coloured desktop icons (32 grid) ---------- */

const ieMark = (
  <>
    <path d="M16 4a12 12 0 1 0 11 17h-6c-3 4-10 2-10-3h17C29 9 23 4 16 4zM11 14c1-6 10-6 11 0z" fill="#2aa9ec" stroke="#0c79c0" strokeWidth=".6" />
    <path d="M2 29C-1 22 10 5 26 2c5-1 5 3 2 8C29 5 26 4 21 6 11 10 2 22 4 28c1 2 4 1 7-1-4 4-8 4-9 2z" fill="#f8ca2a" />
  </>
);
const art: Record<string, ReactNode> = {
  start: <><defs><radialGradient id="orb" cx="0.5" cy="0.9" r="0.9"><stop offset="0" stopColor="#3fd0f5" /><stop offset="0.5" stopColor="#1d6aa8" /><stop offset="1" stopColor="#0f3a66" /></radialGradient></defs><circle cx="16" cy="16" r="15.500" fill="url(#orb)" stroke="#264a6c" /><path d="M3 11C7 1 25 1 29 11c-8 4-18 4-26 0z" fill="#fff" opacity=".35" /><path d="M8 9c3-2 5-1 7 0l-2 7c-2-1-4-1-7 0z" fill="#f0592a" /><path d="M16 10c3 1 5 1 8-1l-2 7c-3 2-5 1-8 0z" fill="#8cc63f" /><path d="M6 17c3-1 5-1 7 0l-2 7c-2-2-4-1-7 0z" fill="#3ea3e8" /><path d="M14 18c3 1 5 1 8-1l-2 7c-3 2-5 1-8 0z" fill="#fcc72c" /></>,
  desktop: <><rect x="1" y="4" width="30" height="24" fill="#dde6f0" /><rect x="2" y="5" width="28" height="22" fill="#2f6de0" /><path d="M2 5h22C20 14 12 20 2 22z" fill="#5a93f0" /><path d="M2 24h28v3H2z" fill="#16233c" /><circle cx="5" cy="25" r="3" fill="#3bb4ee" /></>,
  flip: <><rect x="1" y="4" width="30" height="24" fill="#cdd6e0" /><rect x="2" y="5" width="28" height="22" fill="#26365a" /><path d="M4 8l11 2v10L4 18zM11 10l10 2v10l-10-3zM18 12l10 1v11l-10-2z" fill="#f1f6f4" stroke="#8aa" strokeWidth=".6" /><path d="M6 10l5 1v6l-5-1zM13 13l4 1v6l-4-1zM20 15l6 1v5l-6-1z" fill="#2f8f6b" /><circle cx="5" cy="25" r="3" fill="#3bb4ee" /></>,
  ie: ieMark,
  ieAlert: <>{ieMark}<circle cx="27" cy="4" r="5" fill="#e8202a" stroke="#fff" strokeWidth="1.4" /></>,
  calc: <><rect x="5" y="1" width="22" height="30" rx="2" fill="#d8ecfb" stroke="#6ea6d0" /><rect x="7" y="3" width="18" height="3" fill="#f0a640" /><rect x="7" y="6" width="18" height="8" fill="#f7fbff" stroke="#9bb" strokeWidth=".6" />{t(17, 13, 7, "0", "#334")}<path d="M7 17h18M7 21h18M7 25h18M7 28h18" stroke="#6fa2cb" strokeWidth="2" strokeDasharray="3 2" /><path d="M23 23v6" stroke="#ef9b28" strokeWidth="3" /></>,
  pdf: <><rect x="0" y="0" width="32" height="32" rx="5" fill="#ef6a12" /><path d="M0 22L24 0h8v8L6 32H3l-3-3z" fill="#f68e3a" /><text x="3" y="23" fontSize="13" fontWeight="700" fill="#fff" transform="rotate(-30 16 18)" fontFamily="Liberation Sans, sans-serif">PDF</text></>,
  disc: <><path d="M8 9l3-7 14-1 4 7-1 15-12 5-10-4z" fill="#cfd5da" stroke="#737b82" /><circle cx="18" cy="14" r="8" fill="#eef1f4" stroke="#5f6870" /><circle cx="18" cy="14" r="3" fill="#656e76" /><circle cx="9" cy="22" r="8" fill="#f7f9fa" stroke="#9aa3ab" /><circle cx="9" cy="22" r="2.400" fill="#9fa8b0" /><path d="M11 4l8 5 3 9" stroke="#3c444b" strokeWidth="2" fill="none" /><circle cx="25" cy="26" r="5" fill="#f5f7f9" stroke="#aaa" /></>,
  monitor: <><path d="M7 3l22 2v18L9 25z" fill="#e4e4de" stroke="#777" /><path d="M10 6l16 1v14l-15 2z" fill="#0b3a12" /><path d="M11 15l3-6 3 10 3-9 3 7 3-2" stroke="#3fe04a" fill="none" strokeWidth="1.500" /><path d="M2 6l5 1v14l-5-2z" fill="#c9c9c4" stroke="#777" /><path d="M13 25l11-1 3 4-12 2z" fill="#dededa" stroke="#999" strokeWidth=".6" /></>,
  revit: <><rect x="0" y="0" width="32" height="32" fill="#6f94d6" /><path d="M0 0h32v18L0 26z" fill="#b5c9ec" /><path d="M8 3l8-1c8 0 10 9 3 13l9 14h-7l-8-12-1 12H9z" fill="#2b4380" /><path d="M8 3l5 6-1 9 1 11-4-1z" fill="#4a6cb2" /></>,
  netease: <><rect width="32" height="32" rx="6" fill="#ea2010" /><path d="M22 6c-5-2-5 2-4 8 1 5-5 6-5 2 0-5 8-6 11-1 3 6-2 11-8 11S6 20 8 14c1-3 3-4 5-5" fill="none" stroke="#fff" strokeWidth="2.600" strokeLinecap="round" /></>,
  folder: <><path d="M6 3l10 3v24L6 27z" fill="#f7dd83" stroke="#c7a04a" /><path d="M16 6l6-3 3 2v20l-9 5z" fill="#fbecae" stroke="#c7a04a" /><path d="M9 5l9 3v20" fill="none" stroke="#e2bf62" /></>,
  wps: <><rect width="32" height="32" rx="7" fill="#38a6fb" /><path d="M8 10v13l8-7 8 7V10" fill="none" stroke="#fff" strokeWidth="3" strokeLinejoin="round" /></>,
  wechat: <><ellipse cx="12" cy="12" rx="12" ry="10" fill="#6fd23c" /><path d="M4 18l-1 6 6-3z" fill="#6fd23c" /><circle cx="8" cy="9" r="1.500" fill="#245c10" /><circle cx="16" cy="9" r="1.500" fill="#245c10" /><ellipse cx="22" cy="21" rx="10" ry="8" fill="#f4f4f4" /><path d="M26 27l3 4-6-2z" fill="#f4f4f4" /><circle cx="19" cy="19" r="1.300" fill="#777" /><circle cx="26" cy="19" r="1.300" fill="#777" /></>,
  sogou: <><path d="M1 7q0-3 3-4L24 0q3 0 4 3l4 20q0 4-3 5L9 32q-4 0-5-4z" fill="#f4511e" /><path d="M23 9c-4-3-13-1-13 3 1 5 13 2 13 7 0 6-10 5-14 3" fill="none" stroke="#fff" strokeWidth="4" /></>,
  usb: <><path d="M9 1h14v9H9z" fill="#f3f3f3" stroke="#333" /><path d="M12 4h2v3h-2zM18 4h2v3h-2z" fill="#333" /><path d="M6 10h20v14q0 7-10 7T6 24z" fill="#2d9ae3" stroke="#145a90" /><path d="M16 27V13M11 17v4l5 3 5-4v-3" stroke="#fff" strokeWidth="2" fill="none" /></>,
  shield: <><path d="M16 31C2 26 0 10 3 4c8-4 20-4 26 0z" fill="#2f93d8" /><path d="M3 4c8-4 20-4 26 0l-8 12c-4-6-12-8-18-12z" fill="#f5b51f" /><path d="M29 4c3 10-2 22-13 27l5-15z" fill="#39a345" /></>,
  cube: <><rect width="32" height="32" rx="4" fill="#3f8cf5" /><path d="M16 5l10 5-10 5L6 10zM5 12l10 5v10L5 22zM27 12l-10 5v10l10-5z" fill="#fff" /></>,
  guard: <><path d="M16 1L3 5c-1 13 4 21 13 26 9-5 14-13 13-26z" fill="#2b77e8" stroke="#fff" strokeWidth="2" /><path d="M8 12l8 9 8-9" stroke="#fff" strokeWidth="4" fill="none" /></>,
  plug: <><path d="M4 14l12-11 6 7-3 12-9 3z" fill="#d9dcdf" stroke="#666" /><path d="M10 24l4 6" stroke="#555" strokeWidth="3" /><rect x="17" y="18" width="13" height="12" fill="#e8262a" /></>,
  net: <><rect x="1" y="1" width="30" height="30" rx="2" fill="#1668b8" /><path d="M5 16c6-4 8 2 3 6h9M22 3v12M18 8l4-5 4 5" stroke="#fff" strokeWidth="3" fill="none" /><rect x="13" y="17" width="17" height="13" fill="#f4a21f" stroke="#fff" /><path d="M17 24h9" stroke="#fff" strokeWidth="2.500" /></>,
  safe: <><path d="M5 2h8v6h4v10l-6 6-6-6V8" fill="#6d7478" stroke="#333" /><circle cx="21" cy="21" r="10" fill="#28a53b" stroke="#fff" /><path d="M15 21l5 5 7-9" stroke="#fff" strokeWidth="3" fill="none" /></>,
  black: <><path d="M3 3l7 3 6-4 4 9 10 8-8 3-3 8-7-7-9 5 4-10z" fill="#111" /><path d="M6 15l9-2 2 9-7 3z" fill="#fff" /></>,
  lan: <><path d="M11 9h19v14H11zM15 28h11M20 23v5M3 3v7h6V3M6 10v18h6" fill="none" stroke="#fff" strokeWidth="2.600" /></>,
  sound: <><path d="M3 11h6l8-8v26l-8-8H3z" fill="#fff" stroke="#555" /><path d="M21 10c3 4 3 8 0 12M25 6c6 7 6 13 0 20" fill="none" stroke="#fff" strokeWidth="2.400" /></>,
  mic: <><rect x="10" y="0" width="12" height="21" rx="6" fill="#1d75c8" /><path d="M4 14c0 15 24 15 24 0M16 25v6M10 31h12" stroke="#1d75c8" strokeWidth="3.400" fill="none" /></>,
  keyboard: <><rect x="0" y="4" width="32" height="24" rx="2" fill="none" stroke="#1d75c8" strokeWidth="3" /><path d="M5 11h22M5 17h22" stroke="#1d75c8" strokeWidth="3.400" strokeDasharray="4 2" /><path d="M9 23h14" stroke="#1d75c8" strokeWidth="3" /></>,
  user: <><circle cx="14" cy="8" r="8" fill="#b4c3d8" /><path d="M0 31c0-20 26-20 26 0z" fill="#b4c3d8" /><rect x="18" y="18" width="13" height="12" fill="#dde6f0" stroke="#a6b8d0" strokeWidth="2" /></>,
  shirt: <><path d="M10 2c3 4 9 4 12 0l10 6-4 9-4-2v16H8V15l-4 2-4-9z" fill="#1d75c8" /></>,
  wrench: <><path d="M4 28L17 15" stroke="#1d75c8" strokeWidth="6" strokeLinecap="round" /><path d="M30 9c2 7-6 12-12 8-5-5-2-14 6-16l-4 7 1 4 4 1z" fill="#1d75c8" /></>,
};
const Art = ({ n, s = 32 }: { n: string; s?: number }) => (
  <Svg $s={s} viewBox="0 0 32 32" aria-hidden>
    {art[n]}
  </Svg>
);

const WinGlyph = ({ n }: { n: "min" | "max" | "close" | "help" }) => (
  <Svg $s={13} viewBox="0 0 13 13" fill="none" stroke="#44505f" strokeWidth="1.2" aria-hidden>
    {n === "min" && <rect x="2" y="7" width="9" height="3" fill="#fff" />}
    {n === "max" && <path d="M5 4V1h7v7H9M1 4h7v7H1zM3 7h3v2H3z" fill="#fff" />}
    {n === "close" && <path d="M1.500 2h3l2 2.500L8.500 2h3L8.500 6.500l3 4.500h-3l-2-2.500L4.500 11h-3l3-4.500z" fill="#fff" />}
    {n === "help" && <path d="M3.500 4.500C3.500 0 10 0 10 4c0 2.200-2.200 2.200-2.200 4H5.500c0-3 2-2.500 2-4 0-1.200-1.600-1-1.600.5zM5.500 9.500h2.400v2.500H5.500z" fill="#fff" strokeWidth="1" />}
  </Svg>
);

/* ---------- data ---------- */

const menus = ["文件(F)", "编辑(Q)", "视图(B)", "设计(I)", "文档(N)", "选项(O)", "团队工作(T)", "视窗(W)", "帮助 (H)"];
const editTools = ["scissors", "axe", "alignTop", "corner", "fillet", "resize", "house"];
const groupTools = ["group", "editRing", "cloudList", "rotateBox"];
const attrTools = ["layersList", "lineTypes", "fill", "brick", "composite", "pen", "brush", "zone", "penList", "beamI", "table", "penHatch"];
const designTools: [string, string][] = [
  ["wall", "墙"], ["door", "门"], ["window", "窗"], ["column", "柱"], ["beam", "梁"], ["floor", "板"], ["stairs", "楼梯"],
  ["roof", "屋顶"], ["shell", "壳体"], ["skylight", "天窗"], ["curtain", "幕墙"], ["morph", "变形体"], ["chair", "对象"],
  ["zoneBig", "区域"], ["mesh", "网面"],
];
const docTools: [string, string][] = [
  ["dim", "标注"], ["level", "楼层标高"], ["text", "文本"], ["label", "标签"], ["fill", "填充"], ["line", "直线"],
  ["circle", "弧/圆"], ["polyline", "多义线"], ["figure", "图形"], ["section", "剖面图"], ["elev", "立面图"],
];
const status: [string, string, boolean][] = [
  ["zoomFit", "当前缩放", true], ["rotate", "0.00°", true], ["scale", "1:100", false], ["layers", "自定义", false],
  ["modelView", "整个模型", false], ["penSet", "03 建筑 100", false], ["frame", "03 建筑设计", false],
  ["override", "没有覆盖", false], ["tray", "", true], ["", "简单的米", true],
];
const trayIcons = ["usb", "shield", "cube", "guard", "netease", "wechat", "plug", "usb", "net", "safe", "black", "lan", "sound"];
const counts = ["被放置的对象", "放置的实例", "适用于属性的图库部件"];

const IconButton = ({ n, w, c, look, h, s }: { n: string; w?: number; c?: string; look?: Look; h?: number; s?: number }) => (
  <Btn $w={w} $c={c} $look={look} $h={h} aria-label={n}>
    <Icon n={n} s={s} />
  </Btn>
);
const ArrowBtn = ({ w = 13, h = 13, look = "raised" as Look, down = false, c = "#222" }) => (
  <Btn $w={w} $h={h} $look={look} aria-label="more">
    <Tri $dir={down ? "down" : undefined} $c={c} />
  </Btn>
);

export default function App() {
  return (
    <Page>
      <Global />
      <TitleBar>
        <ArchiLogo />
        <TitleText>窗 装饰面 - GRAPHISOFT ARCHICAD-64 20</TitleText>
        <WinBtn aria-label="minimize"><WinGlyph n="min" /></WinBtn>
        <WinBtn aria-label="restore"><WinGlyph n="max" /></WinBtn>
        <WinBtn aria-label="close"><WinGlyph n="close" /></WinBtn>
      </TitleBar>
      <MenuBar>
        {menus.map((m) => <MenuItem key={m}>{m}</MenuItem>)}
        <Mdi>
          {["M1 9h8", "M1 4h6v6H1zM4 3V1h5v6H8", "M2 2l7 8M9 2l-7 8"].map((d) => (
            <MdiBtn key={d} aria-label="document window">
              <Svg $s={11} viewBox="0 0 11 11" stroke="currentColor" strokeWidth="2" fill="none"><path d={d} /></Svg>
            </MdiBtn>
          ))}
        </Mdi>
      </MenuBar>

      <Toolbar>
        <Sep $w={4} $short />
        <IconButton n="undo" w={26} s={20} />
        <IconButton n="redo" w={26} s={20} c="#b5b5b5" />
        <Sep $w={4} />
        <Gap />
        {["findPick", "dropper", "syringe"].map((n) => <IconButton key={n} n={n} w={25} s={18} />)}
        <Sep $w={7} />
        <Gap $w={3} />
        {["setSquare", "snap", "coords"].map((n) => (
          <Split key={n}>
            <IconButton n={n} w={29} h={29} s={20} look="pressed" />
            <ArrowBtn w={17} h={29} look="pressed" down />
          </Split>
        ))}
        <IconButton n="gridPlus" w={32} s={16} />
        <ArrowBtn w={12} look="flat" down />
        <IconButton n="planeFlat" w={30} s={18} />
        <IconButton n="planeWall" w={22} s={18} />
        <IconButton n="slab" w={32} />
        <ArrowBtn w={16} look="flat" down c="#777" />
        <IconButton n="stamp" w={34} s={18} c={GREY} />
        <ArrowBtn w={12} look="flat" down c="#777" />
        <Gap $w={3} />
        <IconButton n="crane" w={25} h={29} s={18} look="pressed" />
        <IconButton n="ruler12" w={24} s={20} />
        <IconButton n="crossBox" w={24} s={20} />
        <Sep $w={9} />
        {editTools.map((n) => <IconButton key={n} n={n} w={25} s={18} />)}
        <Sep $w={7} />
        {groupTools.map((n) => <IconButton key={n} n={n} w={26} />)}
        <ArrowBtn w={24} look="flat" down />
        <Sep $w={8} $short />
        {attrTools.map((n) => <IconButton key={n} n={n} w={29} s={18} />)}
        <Sep $w={13} $short />
        <IconButton n="setSquare" w={28} s={20} look="blue" />
        <Gap />
        <ArrowBtn w={12} h={28} />
        <Sep $w={9} />
        <IconButton n="branch" w={30} s={18} />
        <ArrowBtn w={10} look="flat" />
        <Gap />
        <Btn $look="off" $w={42}><Icon n="plusChev" /><Gap $w={3} /><Tri $c="#b5b5b5" /></Btn>
        <Gap />
        <Btn $look="raised" $w={42}><Icon n="nodes" /><Gap $w={3} /><Tri /></Btn>
        <Gap />
        <IconButton n="wand" w={28} look="raised" />
        <Sep $w={7} />
        <IconButton n="snap" w={28} s={18} look="blue" />
        <Gap />
        <ArrowBtn w={13} h={28} />
        <Ruling><b>分半</b><span>2</span></Ruling>
        <Upper><ArrowBtn w={14} /></Upper>
        <Sep $w={8} />
        <Btn $look="off" $w={58} $h={22}>确定</Btn>
        <Gap />
        <Btn $look="off" $w={58} $h={22}>取消</Btn>
      </Toolbar>

      <InfoBox>
        <InfoCell>
          <InfoLabel as="div">主要的:</InfoLabel>
          <TallRow>
            <Stack>
              <Small>全部选定的: 18</Small>
              <div>
                <Btn $look="raised" $w={40} $h={18}><Icon n="pick" s={16} /><Gap $w={9} /><Tri /></Btn>
                <Btn $look="raised" $w={40} $h={18}><Icon n="marqueeArrow" s={18} /><Gap $w={7} /><Tri /></Btn>
                <IconButton n="magnet" w={40} h={18} s={14} look="blue" />
              </div>
            </Stack>
            <Btn $look="raised" $w={48}><Icon n="morph" s={20} /><Divider /><Tri $dir="down" /></Btn>
          </TallRow>
        </InfoCell>
        <InfoCell>
          <InfoLabel as="div">图层:</InfoLabel>
          <InfoRow><Btn $look="raised" $w={174}><Gap $w={7} /><Icon n="eye" s={16} /><Gap $w={4} />窗装饰框<Grow /><Tri /><Gap /></Btn></InfoRow>
        </InfoCell>
        <InfoCell>
          <InfoLabel as="div">几何方法:</InfoLabel>
          <InfoRow $gap={7}>
            <IconButton n="step" w={44} s={20} look="pressed" />
            <IconButton n="rect" w={22} />
            <Btn><Tri /></Btn>
            <IconButton n="box3d" w={37} s={20} />
            <IconButton n="revolve" w={37} />
          </InfoRow>
        </InfoCell>
        <InfoCell>
          <InfoLabel as="div">结构:</InfoLabel>
          <InfoRow><Btn $look="raised" $w={174}><Gap $w={2} /><Icon n="concrete" s={22} /><Gap $w={5} />混凝土 - 结构<Grow /><Tri /><Gap /></Btn></InfoRow>
        </InfoCell>
        <InfoCell>
          <InfoLabel as="div">平面图和剖面:</InfoLabel>
          <InfoRow><Btn $look="raised" $w={174}><Grow />平面图和剖面...<Grow /><Tri /><Gap /></Btn></InfoRow>
        </InfoCell>
        <InfoCell>
          <InfoLabel as="div">链接的楼层:</InfoLabel>
          <TallRow>
            <span>始位:</span>
            <Storey>1. 首层<ArrowBtn /></Storey>
          </TallRow>
        </InfoCell>
        <InfoCell>
          <InfoLabel htmlFor="height">标高:</InfoLabel>
          <InfoRow>
            <IconButton n="elevation" w={42} />
            <FieldWrap><Field id="height" defaultValue="266" /></FieldWrap>
            <Gap />
            <Upper><ArrowBtn /></Upper>
          </InfoRow>
        </InfoCell>
        <InfoCell>
          <InfoLabel as="div">实体化:</InfoLabel>
          <InfoRow><IconButton n="infoSolid" w={42} /><span>所有的选集是<br />实体</span></InfoRow>
        </InfoCell>
        <InfoCell>
          <InfoLabel as="div">边缘类型:</InfoLabel>
          <InfoRow $gap={0}>
            <IconButton n="edgeBall" w={44} />
            <IconButton n="edgeHard" w={44} s={18} look="pressed" />
            <IconButton n="edgeSoft" w={44} s={18} />
            <IconButton n="edgeRound" w={44} s={18} />
          </InfoRow>
        </InfoCell>
        <InfoCell>
          <InfoLabel as="div">表面:</InfoLabel>
          <InfoRow>
            <IconButton n="paint" w={42} look="blue" />
            <Btn $look="raised" $w={130}><Swatch />金属 - ...<Grow /><Tri /><Gap /></Btn>
          </InfoRow>
        </InfoCell>
        <InfoCell>
          <InfoLabel htmlFor="eid">元素ID:</InfoLabel>
          <InfoRow><FieldWrap><Field id="eid" defaultValue="SLA - 003" /></FieldWrap></InfoRow>
        </InfoCell>
      </InfoBox>
      <Track><Thumb /></Track>

      <Middle>
        <Toolbox>
          <Grip />
          <Tool $h={26} $on><Icon n="cursor" s={22} />箭头</Tool>
          <Tool $h={30}><Icon n="marquee" s={22} />选取框</Tool>
          <Design>
            <Heading><Tri $dir="down" />设计</Heading>
            {designTools.map(([n, label]) => <Tool key={n}><Icon n={n} />{label}</Tool>)}
          </Design>
          <Heading><Tri $dir="down" />文档</Heading>
          <Docs>
            <DocList>
              {docTools.map(([n, label]) => <Tool key={label} $dim><Icon n={n} />{label}</Tool>)}
            </DocList>
            <DocScroll><Up $dir="down" /><DocThumb /><Tri $dir="down" /></DocScroll>
          </Docs>
          <Heading><Tri />更多</Heading>
        </Toolbox>
        <Main>
          <Tabs>
            <Tab><Icon n="planTab" s={19} />[1. 首层]</Tab>
            <Tab $on><Icon n="cubeTab" s={18} />[3D / 全部]<Grow />×</Tab>
            <TabRest><Nav aria-label="navigator"><Icon n="navigator" s={26} /><Tri $dir="down" /></Nav></TabRest>
          </Tabs>
          <View>
            <Floor />
            <Handle $side="left" />
            <Handle $side="right" />
            <Handle $side="bottom" />
            <Meter />
          </View>
          <StatusBar>
            <NavGroup $w={71}>
              <IconButton n="zoomBack" h={18} s={18} />
              <IconButton n="zoomFwd" h={18} s={18} c="#b5b5b5" />
              <IconButton n="zoomIn" h={18} s={18} />
            </NavGroup>
            <NavGroup $w={51}>
              <IconButton n="orbit" h={18} s={16} />
              <IconButton n="walk" h={18} s={16} />
            </NavGroup>
            {status.map(([n, label, dim], i) => (
              <StatusCell key={i} $dim={dim}>
                <CellIcon $c={dim && n !== "zoomFit" ? GREY : INK}>{n && <Icon n={n} s={16} />}</CellIcon>
                {label}
                {label ? <Tri $c={dim ? "#a5a5a5" : "#333"} /> : <Slot $w={4} />}
              </StatusCell>
            ))}
          </StatusBar>
        </Main>
      </Middle>
      <Strip>
        <Svg $s={16} viewBox="0 0 17 17" fill="none" stroke={INK} strokeWidth="1.5"><path d="M4 11H1V1h12v3M5 6h11v10H5zM5 7.500h11" /></Svg>
      </Strip>

      <Palette>
        <PalClose aria-label="close palette">×</PalClose>
        <IconButton n="crossBox" w={28} s={16} look="raised" />
        <Gap />
        <IconButton n="origin" w={28} look="raised" />
        <Gap />
        <Btn $look="raised" $w={42}><Icon n="axes" /><Gap $w={5} /><Tri /></Btn>
        <Gap />
        <Btn $look="raised" $w={42}><Gap $w={6} /><Icon n="plus" s={12} /><Gap $w={10} /><Tri /></Btn>
        <Sep $w={9} />
        <Delta $look="blue" $w={14}>Δ</Delta>
        <Pair>
          <PairLabel htmlFor="dx">Δx:</PairLabel><PairInput id="dx" defaultValue="8E+10" />
          <PairLabel htmlFor="dy">Δy:</PairLabel><PairInput id="dy" defaultValue="8E+10" />
        </Pair>
        <Delta $look="blue" $w={14}>Δ</Delta>
        <Pair>
          <PairLabel htmlFor="dr">Δr:</PairLabel><PairInput id="dr" defaultValue="40961" />
          <PairLabel htmlFor="da">a:</PairLabel><PairInput id="da" defaultValue="102.81°" />
        </Pair>
        <Btn $look="off" $w={42}><Icon n="gravity" /><Gap $w={5} /><Tri $c="#bdbdbd" /></Btn>
        <Gap $w={8} />
        <Stack>
          <div><Gap /><PairLabel htmlFor="dz">Δz:</PairLabel><PairInput id="dz" defaultValue="8E+10" /></div>
          <div>到项目零点</div>
        </Stack>
      </Palette>

      <Dialog aria-label="图库管理器">
        <DlgTitle>
          <ArchiLogo s={16} />
          <DlgName>图库管理器</DlgName>
          <DlgBtn aria-label="help"><WinGlyph n="help" /></DlgBtn>
          <DlgBtn $red aria-label="close"><WinGlyph n="close" /></DlgBtn>
        </DlgTitle>
        <Client>
          <DlgTabs>
            <DlgTab>项目中的图库</DlgTab>
            <DlgTab $on>嵌入图库</DlgTab>
          </DlgTabs>
          <Sheet>
            <SheetBody>
              <Column>
                <Picker>
                  <Icon n="libFile" s={17} />
                  <Select aria-label="图库"><option>嵌入图库</option></Select>
                  <Tri $dir="down" />
                </Picker>
                <Tree><TreeRow><Icon n="libFile" s={17} />嵌入图库</TreeRow></Tree>
              </Column>
              <Column>
                <ViewBtns>
                  <IconButton n="parent" w={22} h={21} s={18} look="off" />
                  <IconButton n="list" w={22} h={21} s={19} />
                  <IconButton n="tiles" w={22} h={21} s={19} />
                  <IconButton n="large" w={22} h={21} s={15} look="pressed" />
                </ViewBtns>
                <Files>
                  <FileItem><FileIcon /><FileName>窗 装饰面.gsm</FileName></FileItem>
                  <FileItem><FileIcon on /><FileName $on>窗 装饰面02.g...</FileName></FileItem>
                  <FileItem><FileIcon /><FileName>窗装饰面01.gs...</FileName></FileItem>
                </Files>
                <Prop $h={35}>
                  <label htmlFor="name">名称<Colon>：</Colon></label>
                  <NameInput id="name" defaultValue="窗 装饰面02" />
                </Prop>
                {counts.map((label, i) => (
                  <Prop key={label} $h={i === 1 ? 32 : 14}><span>{label}<Colon>：</Colon></span><span>0</span></Prop>
                ))}
              </Column>
            </SheetBody>
            <Actions>
              {["folderPlus", "folderUp", "chairUp", "chairs", "chairRight", "cross"].map((n) => (
                <DlgAction key={n} $look="raised" aria-label={n}><Icon n={n} s={18} /></DlgAction>
              ))}
              <Grow />
              <DlgAction $look="raised" $hot aria-label="save"><Icon n="save" s={16} /></DlgAction>
              <DlgAction $look="raised" aria-label="info"><Icon n="info" s={18} /></DlgAction>
            </Actions>
          </Sheet>
          <Report><Tri $c="#a5a5a5" /><Icon n="check" s={12} />全部图库部件成功加载</Report>
          <Footer>
            <Push $w={134}><Icon n="reload" s={15} />重载&应用</Push>
            <Push $w={88}>取消</Push>
            <Push $w={88} $def>确定</Push>
          </Footer>
        </Client>
        <Grabber viewBox="0 0 10 10" stroke="#a8a8a8" strokeWidth="1.500" strokeDasharray="1.500 2" aria-hidden>
          <path d="M1 9h9M4 5.500h6M8 2h2" />
        </Grabber>
      </Dialog>

      <ImeBar>
        <ImeLogo><Art n="sogou" s={28} /></ImeLogo>
        <Gap $w={5} />
        <ImeKey>英</ImeKey>
        <ImeKey>•,</ImeKey>
        {["mic", "keyboard", "user", "shirt", "wrench"].map((n) => <ImeKey key={n} aria-label={n}><Art n={n} s={15} /></ImeKey>)}
      </ImeBar>

      <Taskbar>
        <Quick $w={54} aria-label="start"><Art n="start" s={36} /></Quick>
        <Gap $w={3} />
        <Quick aria-label="desktop"><Art n="desktop" s={30} /></Quick>
        <Quick aria-label="switch"><Art n="flip" s={30} /></Quick>
        <Task $on><Art n="ie" s={30} />截图的快捷...</Task>
        {["calc", "pdf", "disc", "monitor", "ieAlert", "revit"].map((n) => <Quick key={n} aria-label={n}><Art n={n} s={31} /></Quick>)}
        <Task><Art n="netease" />对不起 谢谢(...</Task>
        <Task><ArchiLogo s={28} />独山洲际酒...</Task>
        <Task $on $join><ArchiLogo s={28} />窗 装饰面 - ...</Task>
        <Task><Art n="folder" s={30} />独山洲际</Task>
        <Task><Art n="wps" />AC使用技巧....</Task>
        <Task><Art n="wechat" />微信</Task>
        <Tray>
          <Lang>CH</Lang>
          <Art n="sogou" s={16} />
          <Gap />
          {trayIcons.map((n, i) => <Art key={i} n={n} s={16} />)}
          <Clock>14:45<br />2017/10/17</Clock>
          <Peek aria-label="show desktop" />
        </Tray>
      </Taskbar>
    </Page>
  );
}
